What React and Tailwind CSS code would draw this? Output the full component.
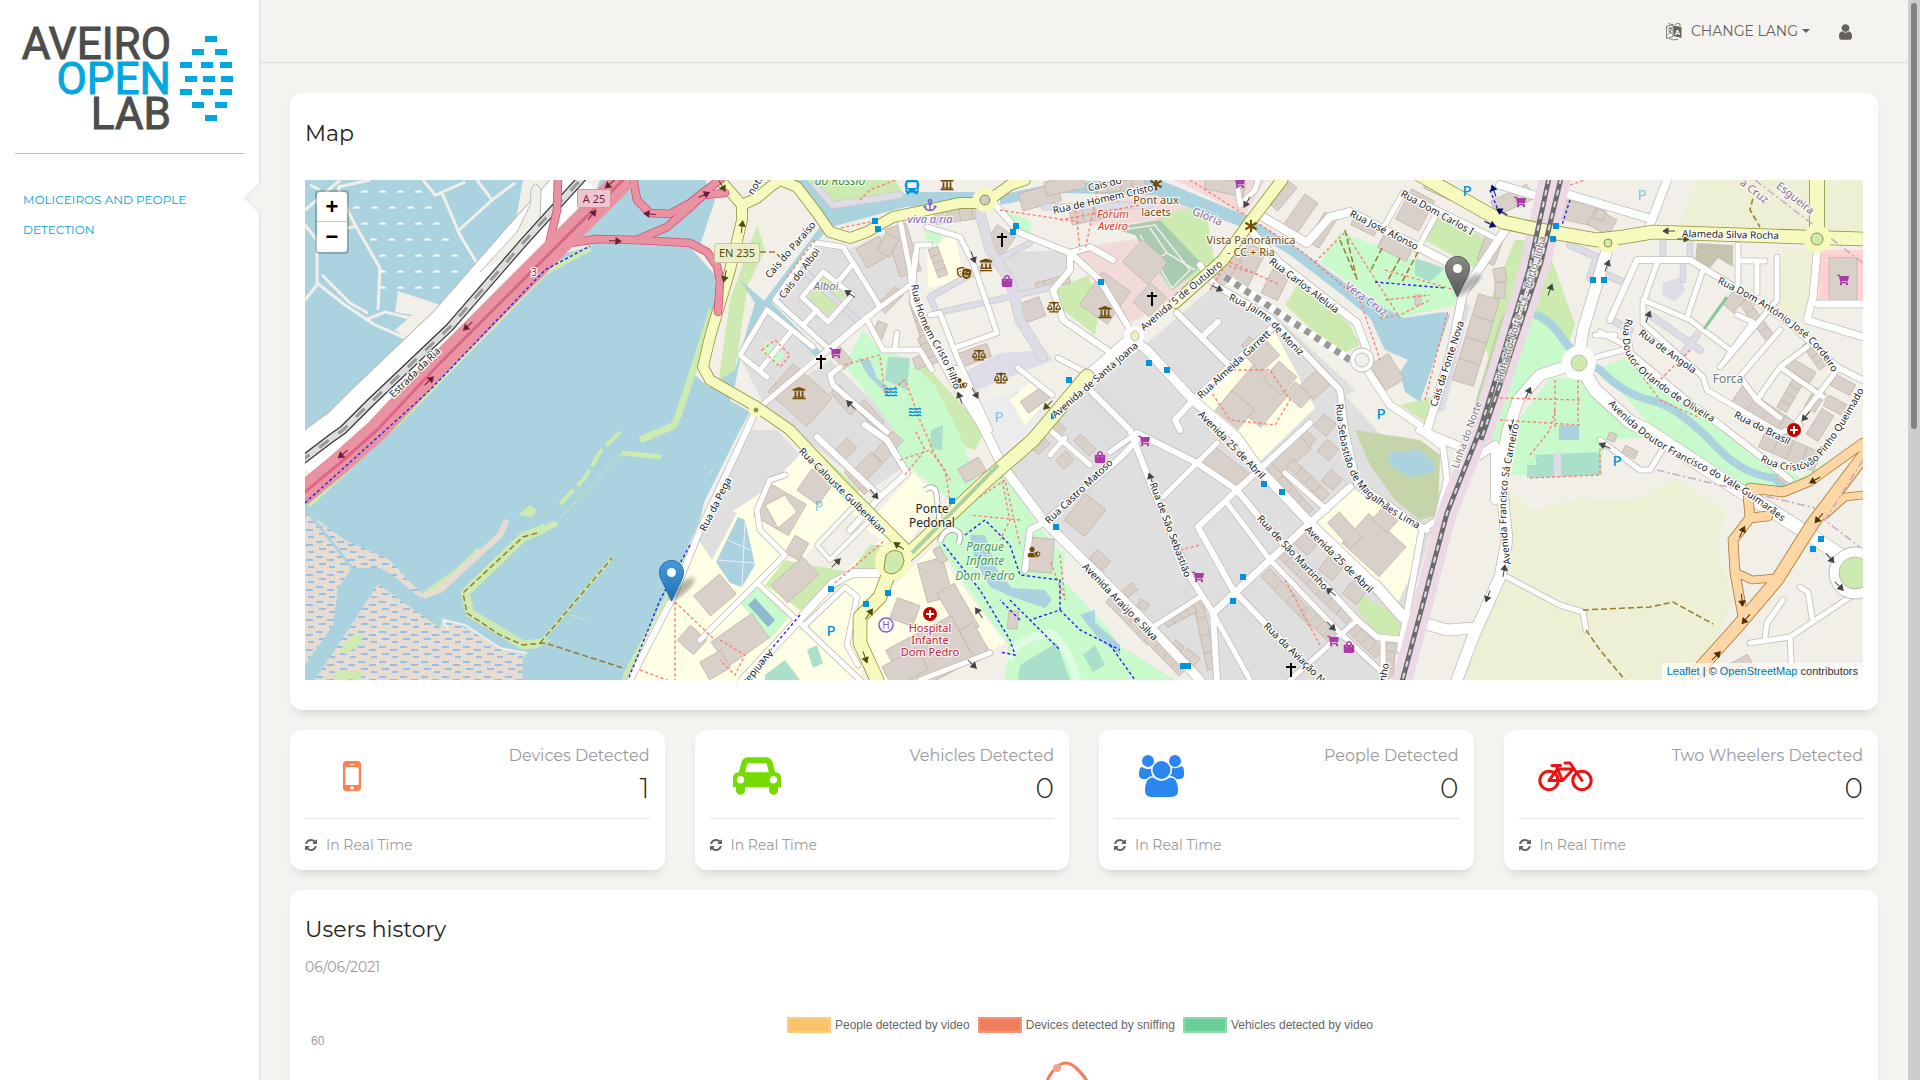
import React from "react";
import {
  FaShoppingCart,
  FaShoppingBag,
  FaUniversity,
  FaBalanceScale,
  FaTheaterMasks,
  FaAnchor,
  FaBus,
  FaAsterisk,
  FaUserShield,
  FaLandmark,
  FaWater,
} from "react-icons/fa";

const UI_FONT = "font-['Montserrat','Inter',sans-serif]";

/* ---------- icons ---------- */

const REFRESH =
  "M1511 928q0 5-1 7-64 268-268 434.5t-478 166.5q-146 0-282.5-55t-243.5-157l-129 129q-19 19-45 19t-45-19-19-45v-448q0-26 19-45t45-19h448q26 0 45 19t19 45-19 45l-137 137q71 66 161 102t187 36q134 0 250-65t186-179q11-17 53-117 8-23 30-23h192q13 0 22.5 9.5t9.5 22.5zm25-800v448q0 26-19 45t-45 19h-448q-26 0-45-19t-19-45 19-45l138-138q-148-137-349-137-134 0-250 65t-186 179q-11 17-53 117-8 23-30 23h-199q-13 0-22.5-9.5t-9.5-22.5v-7q65-268 270-434.5t480-166.5q146 0 284 55.5t245 156.5l130-129q19-19 45-19t45 19 19 45z";
const USER =
  "M1536 1399q0 109-62.5 187t-150.5 78h-854q-88 0-150.5-78t-62.5-187q0-85 8.5-160.5t31.5-152 58.5-131 94-89 134.5-34.5q131 128 313 128t313-128q76 0 134.5 34.5t94 89 58.5 131 31.5 152 8.5 160.5zm-256-887q0 159-112.5 271.5t-271.5 112.5-271.5-112.5-112.5-271.5 112.5-271.5 271.5-112.5 271.5 112.5 112.5 271.5z";
const CAR =
  "M480 1088q0-66-47-113t-113-47-113 47-47 113 47 113 113 47 113-47 47-113zm36-320h1016l-89-357q-2-8-14-17.5t-21-9.5h-768q-9 0-21 9.5t-14 17.5zm1372 320q0-66-47-113t-113-47-113 47-47 113 47 113 113 47 113-47 47-113zm160-96v384q0 14-9 23t-23 9h-96v128q0 80-56 136t-136 56-136-56-56-136v-128h-1024v128q0 80-56 136t-136 56-136-56-56-136v-128h-96q-14 0-23-9t-9-23v-384q0-93 65.5-158.5t158.5-65.5h28l105-419q23-94 104-157.5t179-63.5h768q98 0 179 63.5t104 157.5l105 419h28q93 0 158.5 65.5t65.5 158.5z";
const MOBILE =
  "M976 1408q0-33-23.5-56.5t-56.5-23.5-56.5 23.5-23.5 56.5 23.5 56.5 56.5 23.5 56.5-23.5 23.5-56.5zm208-160v-704q0-13-9.5-22.5t-22.5-9.5h-512q-13 0-22.5 9.5t-9.5 22.5v704q0 13 9.5 22.5t22.5 9.5h512q13 0 22.5-9.5t9.5-22.5zm-192-848q0-16-16-16h-160q-16 0-16 16t16 16h160q16 0 16-16zm288-16v1024q0 52-38 90t-90 38h-512q-52 0-90-38t-38-90v-1024q0-52 38-90t90-38h512q52 0 90 38t38 90z";
const USERS =
  "M657 896q-162 5-265 128h-134q-82 0-138-40.5t-56-118.5q0-353 124-353 6 0 43.5 21t97.5 42.5 119 21.5q67 0 133-23-5 37-5 66 0 159 90 293zm1071 637q0 120-73 189.5t-194 69.5h-874q-121 0-194-69.5t-73-189.5q0-53 3.5-103.5t14-109 26.5-108.5 43-97.5 62-81 85.5-53.5 111.5-20q10 0 43 21.5t73 48 107 48 135 21.5 135-21.5 107-48 73-48 43-21.5q61 0 111.5 20t85.5 53.5 62 81 43 97.5 26.5 108.5 14 109 3.5 103.5zm-1024-1277q0 106-75 181t-181 75-181-75-75-181 75-181 181-75 181 75 75 181zm704 384q0 159-112.5 271.5t-271.5 112.5-271.5-112.5-112.5-271.5 112.5-271.5 271.5-112.5 271.5 112.5 112.5 271.5zm576 225q0 78-56 118.5t-138 40.5h-134q-103-123-265-128 90-134 90-293 0-29-5-66 66 23 133 23 59 0 119-21.5t97.5-42.5 43.5-21q124 0 124 353zm-128-609q0 106-75 181t-181 75-181-75-75-181 75-181 181-75 181 75 75 181z";

const MobileIcon = () => (
  <svg viewBox="512 256 768 1280" className="h-[30px] w-[18px]" fill="#ff7f50"><path d={MOBILE} /></svg>
);
const CarIcon = () => (
  <svg viewBox="0 128 2048 1600" className="h-[38px] w-12" fill="#74da00"><path d={CAR} /></svg>
);
const PeopleIcon = () => (
  <svg viewBox="64 0 1920 1792" className="h-[42px] w-[45px]" fill="#2c86ef"><path d={USERS} /></svg>
);
const BikeIcon = () => (
  <svg viewBox="0 0 55 31" className="h-[31px] w-[55px]" fill="none" stroke="#ec1313" strokeWidth="3" strokeLinejoin="round" strokeLinecap="round">
    <circle cx="11" cy="19.5" r="9.2" />
    <circle cx="44" cy="19.5" r="9.2" />
    <path d="M11 19.5h13.5L35.5 8H19.5zM18 4.500l6.500 15M14 4.500h8.500M27 2h5l12 17.500" />
  </svg>
);

const LangIcon = () => (
  <svg viewBox="0 0 16 19" className="h-[19px] w-4" fill="none" stroke="#66615b">
    <path d="M.5 4.500 7 2.500v12L.5 16.500z" strokeWidth=".8" />
    <path d="M7.500 3.500 15.500 5v11l-8-2z" fill="#66615b" stroke="none" />
    <path d="M2 7l4-1M4 5v1.500M5.500 6.500Q4.500 11 2 12.500M2.500 8Q4 11 6 11.500" strokeWidth=".9" />
    <path d="M2.500 1.500 7 3M9 2.500Q12 .5 14 2v2M3 16.500q4 2.500 9 .8" strokeWidth=".8" />
    <text x="11.5" y="12.5" fontSize="8" fontWeight="700" fontFamily="Liberation Sans" fill="#fff" stroke="none" textAnchor="middle">A</text>
  </svg>
);

function Logo() {
  const bricks = [
    [205, 36], [192, 49], [215, 49], [180, 62], [201, 62], [220, 62], [185, 76],
    [203, 76], [221, 76], [180, 89], [201, 89], [220, 89], [192, 102], [215, 102], [205, 115],
  ];
  return (
    <svg viewBox="18 22 218 112" className="h-28 w-[218px]" role="img" aria-label="Aveiro Open Lab">
      <g fontFamily="Roboto, sans-serif" fontSize="44" textAnchor="end">
        <text x="171" y="59" fill="#4d4d4d" stroke="#4d4d4d">AVEIRO</text>
        <text x="171" y="94" fill="#00a7e1" stroke="#00a7e1">OPEN</text>
        <text x="171" y="129" fill="#4d4d4d" stroke="#4d4d4d">LAB</text>
      </g>
      {bricks.map(([x, y], i) => (
        <rect key={i} x={x} y={y} width="12" height="6" fill="#00a7e1" />
      ))}
    </svg>
  );
}

/* ---------- map data ---------- */

const AREAS = [
  // residential
  ["#e0dfdf", "M813 247 847 250 905 225 913 283 833 347 773 303Z"],
  ["#e0dfdf", "M767 313 820 350 763 403 740 357Z"],
  ["#e0dfdf", "M830 360 913 440 900 470 870 490 775 415 763 405Z"],
  ["#e0dfdf", "M747 430 777 430 800 455 763 493 715 560 700 545Z"],
  ["#e0dfdf", "M990 253 1067 250 1070 280 1013 297Z"],
  ["#e0dfdf", "M1145 345 1215 285 1290 330 1345 395 1440 500 1400 640 1390 680 1200 680 1043 520 1003 465 1060 410Z"],
  ["#e0dfdf", "M1275 315 1355 390 1340 400Z"],
  ["#ececec", "M985 400 1040 385 1060 405 1000 460Z"],
  // schools and hospital
  ["#ffffe5", "M800 455 890 540 880 600 860 680 630 680 668 600 705 530 765 490Z"],
  ["#ffffe5", "M913 473 940 497 907 545 877 513Z"],
  ["#ffffe5", "M933 547 1005 643 935 680 880 680 862 640 890 590Z"],
  ["#ffffe5", "M927 245 955 235 962 270 968 280 928 288Z"],
  ["#ffffe5", "M1200 400 1275 332 1315 408 1253 468Z"],
  ["#ffffe5", "M1352 488 1420 530 1418 560 1397 605 1315 524Z"],
  ["#ffffe5", "M1010 400 1030 383 1048 400 1025 425Z"],
  ["#e0dfdf", "M713 505 737 513 712 560 695 535Z"],
  ["#f2efe9", "M800 562 848 508 868 530 880 540 840 575Z"],
  // commercial
  ["#f2dad9", "M1065 250 1160 235 1215 260 1215 275 1132 322Z"],
  ["#f2dad9", "M1080 205 1130 190 1210 205 1190 220 1090 225Z"],
  ["#f2dad9", "M1175 180 1265 180 1245 215Z"],
  ["#ffd1d1", "M1820 250 1863 250 1863 303 1818 303Z"],
  // grass
  ["#cdebb0", "M797 180 895 180 905 195 830 205Z"],
  ["#cdebb0", "M757 225 765 250 748 285 735 370 718 385 730 300Z"],
  ["#cdebb0", "M823 275 845 295 828 315 808 298Z"],
  ["#cdebb0", "M917 365 925 365 985 430 975 450 945 440Z"],
  ["#cdebb0", "M808 442 860 490 845 500 800 450Z"],
  ["#cdebb0", "M1055 290 1088 275 1100 305 1095 335 1063 310Z"],
  ["#cdebb0", "M1300 280 1350 325 1360 345 1340 355 1285 305Z"],
  ["#cdebb0", "M1435 215 1490 240 1478 270 1425 240Z"],
  ["#cdebb0", "M1515 240 1545 240 1575 325 1568 345 1525 310 1490 360 1478 330Z"],
  ["#cdebb0", "M1400 405 1440 395 1430 425Z"],
  ["#cdebb0", "M1360 595 1403 618 1400 637 1375 633 1358 610Z"],
  ["#cdebb0", "M785 560 855 573 835 590 800 610 765 585Z"],
  ["#cdebb0", "M870 545 885 545 875 570 850 572Z"],
  ["#cdebb0", "M1160 215 1205 205 1215 265 1170 290 1150 260Z"],
  ["#c3d5a9", "M1355 430 1420 440 1440 455 1438 515 1420 520 1395 500 1370 465Z"],
  ["#c3d5a9", "M1520 290 1490 400 1470 420 1500 320Z"],
  // cemetery
  ["#aacbaf", "M1110 228 1160 220 1203 265 1172 290 1135 235Z"],
  // parks
  ["#c8facc", "M863 330 880 348 905 358 935 385 960 435 978 485 1000 472 1050 540 1065 555 1063 580 1110 630 1130 670 1130 680 1005 680 1008 645 937 545 950 500 900 460 895 430 845 365Z"],
  ["#c8facc", "M925 225 945 232 938 245 925 240Z"],
  ["#c8facc", "M1008 212 1030 220 1032 240 1010 228Z"],
  ["#c8facc", "M765 340 785 355 775 365 762 352Z"],
  ["#c8facc", "M1340 232 1455 275 1455 305 1400 318 1320 262Z"],
  ["#c8facc", "M1525 310 1568 345 1560 365 1530 380 1500 430 1485 440 1478 430Z"],
  ["#c8facc", "M1550 378 1590 378 1650 437 1605 440 1600 475 1512 475 1515 425Z"],
  ["#c8facc", "M1600 368 1630 355 1650 380 1720 425 1800 478 1863 440 1863 450 1785 492 1740 485 1650 425Z"],
  ["#c8facc", "M1110 640 1175 680 1110 680Z"],
  ["#c8facc", "M757 585 790 615 770 640 738 600Z"],
  ["#c8facc", "M1490 430 1507 420 1495 450 1480 447Z"],
  // meadow
  ["#eef0d5", "M1697 180 1810 180 1810 230 1677 227Z"],
  ["#eef0d5", "M1825 180 1863 180 1863 231 1825 231Z"],
  ["#eef0d5", "M1783 247 1812 250 1810 305 1793 322 1777 312Z"],
  ["#eef0d5", "M1510 490 1533 510 1580 498 1633 500 1677 478 1727 510 1717 545 1732 597 1717 643 1680 680 1455 680 1500 590Z"],
  ["#c6c3ae", "M1697 243 1733 245 1733 267 1718 258 1710 268 1695 260Z"],
  // pedestrian
  ["#dddde8", "M963 373 1000 353 1043 350 1053 360 1010 377 970 393Z"],
  ["#dddde8", "M1663 283 1680 277 1685 290 1675 302 1662 295Z"],
  ["#dddde8", "M1458 300 1470 305 1445 410 1430 415Z"],
  // water
  ["#aad3df", "M783 180 807 180 830 207 915 192 975 192 970 202 905 207 828 228 815 210Z"],
  ["#aad3df", "M1000 195 1060 182 1160 180 1245 215 1300 250 1355 290 1403 318 1443 312 1450 315 1420 402 1405 392 1400 372 1408 360 1385 350 1370 318 1345 297 1290 255 1245 228 1155 195 1060 193 1000 205Z"],
  ["#aad3df", "M740 280 767 303 742 350 735 385 720 430 700 520 663 600 620 680 525 680 525 655 620 600 640 500 690 400 712 385 735 370 755 303Z"],
  ["#aad3df", "M1390 452 1420 450 1433 462 1435 472 1410 477 1390 465Z"],
  ["#aad3df", "M970 535 985 535 997 570 1012 588 1045 590 1052 600 1045 608 1015 598 990 587 975 560Z"],
  ["#aad3df", "M738 517 745 520 755 565 742 587 730 583 716 562Z"],
  ["#aad3df", "M858 358 870 360 877 378 892 390 888 395 868 375Z"],
  ["#aad3df", "M1080 615 1095 610 1095 622 1120 645 1120 655 1100 640Z"],
  ["#aad3df", "M1559 425 1579 425 1579 440 1559 440Z"],
  // pitches
  ["#aae0cb", "M888 357 910 358 907 390 885 380Z"],
  ["#aae0cb", "M931 430 943 425 942 450 930 448Z"],
  ["#aae0cb", "M1415 258 1445 268 1430 282 1415 275Z"],
  ["#aae0cb", "M1535 455 1600 452 1602 475 1527 478 1527 465 1537 465Z"],
  ["#dddde8", "M1554 453 1561 453 1561 477 1554 477Z"],
  ["#8eb9cf", "M748 605 755 598 775 620 768 627Z"],
  ["#aae0cb", "M1020 665 1057 643 1070 680 1018 680Z"],
  ["#aae0cb", "M807 650 817 645 823 663 813 668Z"],
  ["#aae0cb", "M1083 655 1095 645 1105 665 1093 672Z"],
  ["#aae0cb", "M765 675 785 660 800 680 765 680Z"],
];

const MARSH = [
  "M307 512 345 540 390 560 408 580 425 596 420 598 395 577 380 568 352 568 338 588 333 625 305 665 305 520Z",
  "M378 584 440 628 443 618 470 630 495 645 523 655 522 680 315 680Z",
];

const BUILDINGS = [
  [903, 250, 22, 50, -18], [873, 252, 26, 22, -30], [890, 300, 26, 12, -45], [938, 262, 10, 30, -20],
  [1000, 240, 22, 22, 35], [960, 215, 50, 12, -8], [1040, 197, 40, 18, -15], [1065, 185, 40, 14, -12],
  [1120, 186, 50, 10, -6], [1095, 212, 50, 16, -12], [1225, 186, 40, 14, 12], [1145, 262, 34, 30, 42],
  [1150, 300, 22, 26, 42], [1105, 298, 34, 40, 35], [1032, 310, 22, 20, -20], [1053, 283, 34, 9, -15],
  [975, 355, 30, 14, -20], [920, 362, 12, 12, -20], [842, 358, 20, 12, 50], [800, 395, 52, 38, 42],
  [845, 400, 30, 12, 48], [870, 415, 30, 12, 48], [888, 447, 14, 30, 42], [865, 470, 34, 16, -45],
  [845, 450, 20, 14, -45], [815, 487, 26, 26, 35], [780, 510, 40, 36, 30], [797, 548, 16, 20, 30],
  [795, 580, 42, 24, -42], [715, 595, 34, 26, -40], [692, 640, 22, 20, 42], [740, 640, 50, 30, -35],
  [715, 665, 24, 20, -30], [935, 580, 26, 40, -15], [920, 320, 10, 40, -18], [928, 350, 10, 30, -24],
  [958, 610, 20, 50, -30], [930, 655, 74, 50, -28], [905, 612, 24, 22, 20], [905, 668, 40, 24, -28],
  [975, 642, 36, 16, 60], [940, 555, 8, 16, -30], [1039, 555, 28, 34, 5], [1013, 620, 10, 18, 5],
  [972, 470, 24, 16, -30], [1085, 515, 26, 34, 38], [1040, 445, 16, 12, -45], [1065, 460, 14, 12, -45],
  [1085, 445, 22, 10, 45], [1100, 560, 18, 12, 42], [1055, 425, 22, 10, 45], [1035, 400, 26, 14, -35],
  [1258, 395, 46, 46, 40], [1235, 410, 30, 26, 40], [1280, 378, 24, 24, 42], [1298, 395, 22, 16, 42],
  [1262, 355, 26, 24, -42], [1315, 385, 22, 20, -42], [1325, 425, 16, 16, 40], [1305, 440, 16, 16, 40],
  [1226, 468, 50, 20, 38], [1290, 455, 40, 18, -40], [1290, 490, 60, 9, 48], [1308, 480, 50, 10, 44],
  [1328, 450, 15, 15, 40], [1332, 480, 15, 15, 40], [1374, 545, 50, 40, 42], [1345, 530, 34, 16, 48],
  [1385, 520, 20, 16, 42], [1306, 542, 20, 18, 42], [1331, 568, 18, 18, 40], [1355, 592, 18, 18, 40],
  [1300, 570, 62, 12, 44], [1330, 600, 56, 12, 44], [1290, 598, 70, 12, 46], [1320, 625, 40, 12, 46],
  [1365, 640, 40, 12, 44], [1390, 660, 9, 34, 3], [1205, 635, 10, 70, -12], [1180, 615, 34, 10, -28],
  [1175, 650, 12, 16, 40], [1190, 658, 16, 12, 40], [1130, 620, 60, 10, 46], [1165, 655, 50, 9, 46],
  [1130, 590, 12, 9, -40], [1143, 605, 10, 8, 30], [1300, 215, 16, 40, 35], [1282, 195, 14, 30, 40],
  [1322, 230, 14, 34, 32], [1395, 248, 32, 14, 26], [1415, 210, 26, 34, 28], [1365, 225, 26, 12, 26],
  [1490, 250, 18, 26, 20], [1387, 372, 22, 30, -32], [1476, 340, 22, 90, 17], [1440, 188, 30, 14, 25],
  [1248, 265, 20, 40, 28], [1275, 285, 18, 26, 26], [1225, 268, 18, 30, 35], [1512, 200, 40, 16, -25],
  [1580, 213, 44, 20, 12], [1602, 222, 24, 18, 30], [1843, 279, 28, 43, 0],
  [1757, 320, 10, 46, -36], [1735, 300, 14, 22, 40], [1800, 370, 30, 12, 30], [1815, 355, 30, 10, 55],
  [1790, 395, 11, 34, 30], [1765, 415, 70, 22, 34], [1843, 385, 22, 12, 28], [1835, 405, 20, 12, 28],
  [1815, 400, 12, 22, 30], [1790, 450, 60, 20, 24], [1820, 425, 14, 30, 32], [1630, 452, 14, 8, 28],
  [1612, 437, 8, 8, 20], [1782, 478, 10, 6, 30], [1740, 672, 30, 24, -28], [1500, 290, 10, 16, 0],
  [1600, 215, 10, 10, 20], [1418, 300, 6, 10, 0], [1250, 345, 12, 12, 40], [1500, 275, 12, 14, -10],
  [888, 245, 14, 20, 30], [880, 330, 10, 16, 20], [858, 480, 30, 10, 48],
];

const LANES = [
  // [width, path]
  [5, "M817 243 843 247 880 307 830 350 M913 283 867 317 760 407 M813 245 775 300 830 350"],
  [5, "M823 272 852 295 828 322 802 297Z M852 265 838 282 M817 310 803 325 M767 310 740 355 767 377 M767 310 813 347 M790 333 760 370"],
  [5, "M900 220 910 270 913 303 930 340 953 383 983 430 M927 227 960 237 973 263 997 333 957 347 M930 315 940 313 957 357 990 430"],
  [5, "M867 320 883 350 920 350 932 370 M897 333 895 348 M915 255 913 283 M930 245 917 245 915 265"],
  [6, "M997 207 1020 233 1070 253 1100 280 1132 333 M1070 253 1090 247 1113 260 M1070 253 1070 270 1053 290 1063 320 1107 350"],
  [5, "M1018 368 1052 395 M1058 358 1085 372 M840 367 830 375 833 385 887 432"],
  [8, "M1307 243 1330 217 1350 212 1457 267 M1263 217 1307 243"],
  [5, "M1403 193 1493 237 M1403 193 1385 225 M1437 213 1417 250 M1238 190 1240 205 1255 190 1258 180"],
  [8, "M1507 227 1463 293 1450 357 1427 430"],
  [7, "M1253 233 1280 263 1357 323 1367 350 M1367 370 1390 405 1420 425"],
  [6, "M1200 265 1215 285 1270 317 1340 390 1345 430 1357 483 1410 520 1427 530"],
  [6, "M1273 327 1193 400 1175 420 1180 430 M1177 313 1227 363 M1218 322 1202 337"],
  [9, "M1130 337 1147 350 1193 400 1237 437 1260 470 1310 523 1377 587"],
  [11, "M1375 585 1403 617 1447 630 1475 628"],
  [6, "M1085 385 1130 430 1153 490 1190 577 1213 613 1217 680"],
  [6, "M1137 433 1197 463 1237 490 1267 527 1323 583 1357 620 1377 637 1403 640"],
  [6, "M1310 423 1237 490 1198 527 1233 590 1310 670"],
  [7, "M1350 487 1310 523 1270 560 1213 613"],
  [5, "M1200 597 1153 627 M1227 503 1270 560 1340 633 1385 675 M1357 620 1290 680 M1163 497 1217 443 M1285 473 1327 510 M1383 640 1383 680"],
  [6, "M1140 437 1120 458 1043 523 M1025 570 1030 530 1045 522"],
  [5, "M1050 455 1065 438 M1090 465 1050 430 M1213 613 1250 680 M1110 452 1137 433"],
  [9, "M955 370 1003 467 1043 520 1090 567 1120 597 1153 630 1200 680"],
  [11, "M1133 337 1088 376"],
  [6, "M817 437 880 497 907 473 887 440 865 425 M880 497 850 530"],
  [8, "M743 680 833 583 853 573 880 573"],
  [5, "M757 583 800 623 860 680 M700 640 757 583 785 555 760 530 757 510 770 480 785 475"],
  [5, "M805 625 845 587 857 597 847 645 858 665 M920 680 990 653"],
  [4, "M817 545 855 505 870 520 830 560Z"],
  [6, "M1420 430 1443 447 1447 480 1437 520 1422 530 1400 650"],
  [11, "M1607 250 1583 330 1578 363 1540 375 1518 400 1508 430 1500 470 1507 540 1500 577 1473 637 1457 680"],
  [8, "M1420 430 1480 455 1495 445 1495 500"],
  [13, "M1580 365 1595 390 1630 422 1647 430 1723 480 1807 533 1840 555"],
  [6, "M1610 320 1637 260 1690 260 1723 280 1790 323 1837 367 1863 380"],
  [5, "M1657 263 1643 303 1643 323 1703 377 1707 390 1780 433 1800 425"],
  [6, "M1627 333 1630 353 1690 403 1723 427 1765 460 1790 480"],
  [5, "M1643 300 1690 320 1730 350 M1703 270 1687 317 M1738 245 1738 287 M1738 261 1765 261 M1757 261 1757 293"],
  [5, "M1777 257 1777 300 1720 367 M1780 330 1737 380 M1807 347 1780 367 1757 400 M1780 367 1823 397 M1837 370 1795 425"],
  [5, "M1740 377 1757 400 1780 418 M1737 315 1753 322 1727 357 M1597 357 1623 350"],
  [7, "M1817 253 1813 297 1807 320 M1807 320 1863 337 M1818 304 1863 304"],
  [8, "M1667 180 1650 225 M1570 195 1648 218 M1500 185 1540 197"],
  [5, "M1595 335 1615 335 M1600 332 1625 345 M1850 597 1790 637 1750 643 M1790 637 1792 680 M1812 618 1808 592 1800 587 M1765 637 1767 623 1783 600"],
  [5, "M1507 577 1560 605 1583 612 1586 630 M1600 440 1640 470 1650 470 1665 445"],
  [6, "M757 407 747 430 700 530 673 597 630 680"],
];

const PLAZAS = [
  [9, "M980 213 990 250 1010 280 1020 320 1043 357"],
  [5, "M1030 243 997 260 930 297 937 313 1053 287 M803 270 857 320 M1683 260 1683 280 M1663 240 1663 258 M1690 240 1690 260"],
  [6, "M1650 315 1700 350 M1697 335 1680 358 M1607 275 1625 283 M1570 245 1597 257 1590 278 M1612 320 1630 330"],
  [6, "M815 185 833 205 M833 205 900 195 M1045 207 1150 205"],
];

const YELLOW = [
  [10, "M720 180 742 205 742 220 730 270 710 337 703 367 710 380 757 407 790 430 840 483 887 530 905 548"],
  [10, "M742 205 757 198 770 187 780 180 797 187 817 213 830 232 850 238 867 232 893 217 927 210 960 203 985 203 1010 185 1025 180"],
  [11, "M1282 180 1250 222 1223 260 1175 303"],
  [13, "M1087 376 1033 440 987 480 913 550 890 570 880 597 860 617 860 643 877 680"],
  [13, "M1420 175 1503 222 1540 230 1597 240 1623 237 1653 232 1863 239"],
  [14, "M1817 180 1817 240"],
];

const PINK_PATHS = [
  "M815 240 785 280 M830 230 870 222 M762 350 775 340 790 355 780 367Z M845 365 880 355 885 395 905 380 920 420 935 455 950 480",
  "M900 460 930 450 945 470 950 500 M905 475 925 450 915 430 M975 500 1005 480 1020 545 M1000 470 1010 520 1000 540 M1020 520 970 515",
  "M1060 555 1065 600 1050 560 M720 640 745 655 735 675 720 660 M675 602 675 680 M675 602 715 640 M640 670 680 685",
  "M835 583 885 540 M1210 390 1225 370 1270 370 1290 400 1275 425 1230 420Z M1315 262 1345 232 1400 318 M1425 400 1448 310",
  "M1385 270 1455 290 M1385 300 1430 295 M1380 318 1400 315 1430 300 M1190 180 1245 215 1300 250 1360 300 1380 360 M1230 262 1280 285",
  "M1285 580 1320 645 M1500 398 1580 400 M1500 420 1580 425 M1555 380 1555 430 M1578 380 1578 425 M1530 478 1600 475 1600 440 M1530 455 1550 430 1555 410",
  "M1630 360 1660 400 1700 418 M1570 185 1600 175 M1075 205 1080 250 M1000 210 1080 222 M1100 180 1085 250",
  "M1180 550 1200 545 M1210 290 1225 265 1260 275 M1690 350 1660 380 M1060 220 1140 205 M895 180 870 190 860 200",
];

const CYCLE_PATHS = [
  "M690 545 660 600 628 680", "M305 503 430 390 545 270 590 246", "M940 540 980 590 1010 640 1015 655 1000 652",
  "M965 535 985 520 1010 545 1020 575 1060 580 1060 610 1030 620", "M1010 600 1060 650", "M1060 610 1080 630 1120 650",
  "M1375 282 1445 288", "M1570 200 1562 225", "M1490 190 1500 215", "M1110 645 1135 680", "M800 615 745 680", "M1020 620 1000 600",
];

const BROWN_TRACKS = [
  "M537 533 523 537 463 593 467 613 500 635 523 645 545 643 623 668", "M540 643 612 558",
  "M1583 610 1650 607 1673 602 1713 624", "M1586 630 1600 650 1625 680", "M760 252 775 252 785 262",
  "M1340 240 1355 275", "M1345 230 1357 280", "M1382 248 1370 272", "M1400 258 1388 280", "M1418 252 1402 282", "M1755 190 1750 210 1760 227",
];

const BUS_STOPS = [
  [875, 221], [878, 229], [1016, 226], [1013, 232], [1101, 282], [1069, 380], [1054, 416], [1149, 363],
  [1167, 370], [1556, 226], [1553, 239], [1593, 280], [1604, 280], [952, 501], [831, 589], [888, 593],
  [866, 604], [1056, 527], [1264, 484], [1282, 492], [1243, 577], [1233, 601], [1183, 666], [1188, 666], [1821, 539], [1813, 549],
];

const ARROWS = [
  ["#6b1f3a", 610, 184, 140], ["#6b1f3a", 592, 215, -50], ["#6b1f3a", 650, 214, 185], ["#6b1f3a", 704, 195, -25],
  ["#6b1f3a", 615, 241, 2], ["#6b1f3a", 468, 326, 137], ["#6b1f3a", 429, 381, -43], ["#6b1f3a", 343, 454, 140],
  ["#4d4d12", 722, 186, 60], ["#4d4d12", 742, 227, -83], ["#4d4d12", 725, 276, 103], ["#444", 973, 257, 70],
  ["#444", 850, 294, 215], ["#444", 851, 405, 225], ["#444", 960, 398, 250], ["#444", 975, 393, 60],
  ["#4d4d12", 1048, 405, 135], ["#444", 1217, 288, 25], ["#444", 1247, 202, 120], ["#444", 1669, 231, 180],
  ["#4d4d12", 1683, 239, 0], ["#444", 1607, 266, -70], ["#444", 1550, 290, -70], ["#444", 1648, 317, -70],
  ["#444", 1528, 393, -65], ["#444", 1512, 425, 105], ["#444", 1806, 416, 130], ["#444", 1151, 479, 250],
  ["#444", 1331, 592, 218], ["#444", 1331, 626, 45], ["#444", 1504, 571, -80], ["#444", 1488, 596, 110],
  ["#4d3000", 1815, 480, 150], ["#4d3000", 1819, 518, 130], ["#4d3000", 1742, 532, -65], ["#4d3000", 1742, 600, 85],
  ["#4d3000", 1746, 619, 130], ["#4d3000", 1716, 656, -45], ["#444", 1830, 558, 50], ["#444", 1839, 586, 45],
  ["#444", 1605, 446, 205], ["#444", 874, 494, 50], ["#444", 836, 563, -45], ["#4d4d12", 899, 546, 215],
  ["#4d4d12", 869, 614, -55], ["#4d4d12", 865, 657, 70], ["#444", 979, 613, 235], ["#444", 972, 664, 45],
  ["#00107a", 1494, 191, 250], ["#00107a", 1502, 212, 210], ["#00107a", 1490, 224, 25],
];

const LABELS = [
  // [text, start x, start y, end x, end y]
  ["Estrada da Ria", 392, 394, 437, 350], ["Cais do Paraíso", 768, 275, 812, 224], ["Cais do Alboi", 782, 295, 816, 251],
  ["Rua de Homem Cristo", 1058, 209, 1148, 188], ["Cais do", 1087, 188, 1122, 179], ["Avenida 5 de Outubro", 1145, 325, 1217, 265],
  ["Rua Carlos Aleluia", 1274, 262, 1335, 308], ["Rua Almeida Garrett", 1202, 393, 1265, 335], ["Rua José Afonso", 1354, 214, 1415, 245],
  ["Rua Dom Carlos I", 1405, 194, 1470, 230], ["Cais da Fonte Nova", 1434, 402, 1459, 325], ["Avenida de Santa Joana", 1058, 411, 1131, 348],
  ["Alameda Silva Rocha", 1682, 233, 1779, 235], ["Rua de Angola", 1643, 333, 1693, 369], ["Rua do Brasil", 1738, 415, 1787, 440],
  ["Rua da Pega", 703, 528, 727, 480], ["Rua Calouste Gulbenkian", 801, 449, 885, 532], ["Avenida", 771, 653, 750, 680],
  ["Rua Castro Matoso", 1050, 518, 1107, 464], ["Avenida Araújo e Silva", 1088, 568, 1153, 635], ["Rua de São Sebastião", 1155, 487, 1187, 572],
  ["Avenida 25 de Abril", 1203, 415, 1261, 474], ["Avenida 25 de Abril", 1310, 530, 1369, 588], ["Rua de São Martinho", 1263, 520, 1323, 584],
  ["Rua da Aviação Naval", 1270, 628, 1333, 690], ["nho", 1382, 680, 1385, 664], ["noto", 748, 196, 763, 172],
];

const CURVED_LABELS = [
  ["homem", "Rua Homem Cristo Filho", "M911 285Q917 320 932 343T954 390"],
  ["moniz", "Rua Jaime de Moniz", "M1228 300Q1262 314 1275 330T1300 356"],
  ["antonio", "Rua Dom António José Cordeiro", "M1717 283Q1760 303 1790 326T1832 372"],
  ["orlando", "Rua Doutor Orlando de Oliveira", "M1626 318Q1616 350 1638 371T1715 424"],
  ["guimaraes", "Avenida Doutor Francisco do Vale Guimarães", "M1608 404Q1640 440 1690 464T1785 524"],
  ["pinho", "Rua Cristóvão Pinho Queimado", "M1760 461Q1800 482 1822 456T1866 386"],
  ["carneiro", "Avenida Francisco Sá Carneiro", "M1511 564Q1504 520 1507 490T1525 400"],
  ["lima", "Rua Sebastião de Magalhães Lima", "M1336 404Q1340 460 1355 482T1420 530"],
];

const POI_TEXT = [
  // [text, x, y, colour, size, italic, rotation]
  ["do Rossio", 840, 185, "#3a8a3a", 12, true, 0], ["viva a ria", 930, 223, "#8461c4", 11, true, 0], ["Alboi", 826, 290, "#777", 11, true, 0],
  ["Fórum", 1113, 218, "#e03c31", 11, true, 0], ["Aveiro", 1113, 230, "#e03c31", 11, true, 0],
  ["Pont aux", 1156, 204, "#734a08", 11, false, 0], ["lacets", 1156, 216, "#734a08", 11, false, 0],
  ["Vista Panorâmica", 1251, 244, "#734a08", 11, false, 0], ["- CC + Ria", 1251, 256, "#734a08", 11, false, 0],
  ["Glória", 1206, 220, "#8d6a99", 11, false, 22], ["Vera Cruz", 1364, 302, "#8d6a99", 11, false, 36],
  ["Esgueira", 1793, 201, "#8d6a99", 11, false, 38], ["a Cruz", 1752, 194, "#8d6a99", 11, false, 38],
  ["Forca", 1728, 383, "#777", 12, false, 0], ["Ponte", 932, 513, "#222", 12, false, 0], ["Pedonal", 932, 527, "#222", 12, false, 0],
  ["Parque", 985, 551, "#3f9c4f", 12, true, 0], ["Infante", 985, 565, "#3f9c4f", 12, true, 0], ["Dom Pedro", 985, 580, "#3f9c4f", 12, true, 0],
  ["Hospital", 930, 632, "#c0283c", 11, false, 0], ["Infante", 930, 644, "#c0283c", 11, false, 0], ["Dom Pedro", 930, 656, "#c0283c", 11, false, 0],
  ["Linha do Norte - Lx - Porto, linha", 1524, 310, "#777", 10, false, -73], ["Linha do Norte", 1470, 436, "#777", 10, false, -70],
];

const PARKINGS = [
  [1467, 196, 1], [1381, 419, 1], [1642, 200, 0.4], [999, 422, 0.4], [819, 511, 0.4], [831, 636, 1], [1617, 466, 1],
];

const POI_ICONS = [
  ...[[835, 353], [1144, 441], [1198, 577], [1333, 641], [1239, 183], [1520, 202], [1843, 280]].map((p) => [FaShoppingCart, "#ac39ac", 12, ...p]),
  ...[[1007, 281], [1100, 457], [1349, 647]].map((p) => [FaShoppingBag, "#ac39ac", 12, ...p]),
  ...[[799, 393], [1105, 312], [947, 184]].map((p) => [FaUniversity, "#734a08", 14, ...p]),
  ...[[1054, 307], [979, 355], [1001, 378]].map((p) => [FaBalanceScale, "#734a08", 14, ...p]),
  ...[[961, 383], [1034, 552]].map((p) => [FaUserShield, "#734a08", 13, ...p]),
  ...[[1156, 184], [1251, 226]].map((p) => [FaAsterisk, "#734a08", 13, ...p]),
  ...[[891, 392], [915, 412]].map((p) => [FaWater, "#0092da", 13, ...p]),
  [FaTheaterMasks, "#734a08", 15, 964, 273],
  [FaLandmark, "#734a08", 13, 986, 265],
  [FaAnchor, "#8461c4", 14, 930, 205],
  [FaBus, "#0092da", 15, 912, 187],
];

function Pin({ x, y, from, to, id }) {
  return (
    <g transform={`translate(${x - 12.5} ${y - 41})`}>
      <ellipse cx="23" cy="29" rx="16" ry="5" fill="#000" opacity=".3" transform="rotate(-42 23 29)" filter="url(#soft)" />
      <linearGradient id={id} x1="0" y1="0" x2="0" y2="1">
        <stop offset="0" stopColor={from} />
        <stop offset="1" stopColor={to} />
      </linearGradient>
      <path d="M12.500.5C5.800.5.5 5.800.5 12.500c0 4 2 8 4.500 12.500L12.500 41 20 25c2.500-4.500 4.500-8.500 4.500-12.500C24.500 5.800 19.200.5 12.500.5z" fill={`url(#${id})`} stroke={to} />
      <circle cx="12.5" cy="12.5" r="4.5" fill="#fff" />
    </g>
  );
}

function Cased({ roads, fill, casing }) {
  return (
    <g fill="none" strokeLinejoin="round" strokeLinecap="round">
      {roads.map(([w, d]) => <path key={`c${d}`} d={d} stroke={casing} strokeWidth={w + 1.6} />)}
      {roads.map(([w, d]) => <path key={d} d={d} stroke={fill} strokeWidth={w} />)}
    </g>
  );
}

function CityMap() {
  const railWest = "M300 462 333 437 343 430 370 403 450 327 523 243 583 177";
  const railEast = ["M1549 178 1529 270 1480 430 1447 513 1402 682", "M1561 178 1541 262 1500 385 1481 440"];
  const motorway = "M300 496 340 463 377 430 440 363 523 280 573 230 625 178";
  const ramps = [
    [7, "M558 178 557 210 549 245"],
    [7, "M633 178 637 200 650 213 670 214 690 203 722 178"],
    [7, "M570 243 597 239 637 240 690 243 707 252 717 266 720 280 718 312"],
    [7, "M637 240 667 227 687 210 703 195 725 193"],
  ];
  const pondDams = [
    "M305 210 340 180", "M310 185 320 190", "M338 187 350 215 358 230 380 268 378 310", "M338 187 370 180", "M423 180 435 195 442 193 460 235 478 265",
    "M440 193 465 182", "M477 180 492 200 515 183", "M492 200 457 232", "M305 225 317 240 317 283 345 305 375 325 410 340", "M305 300 317 285",
    "M322 275 350 303 368 313", "M365 320 385 312 410 318", "M330 232 357 226",
  ];
  const orange = [
    [9, "M1863 443 1810 481 1783 492 1750 488"],
    [9, "M1768 516 1750 518 1733 540 1735 573 1743 617"],
    [7, "M1737 573 1752 580 1775 578"],
    [9, "M1748 495 1750 518"],
    [7, "M1863 495 1845 497 1825 515"],
    [12, "M1868 450 1813 523 1777 580 1737 627 1685 685"],
  ];
  const saltRows = [
    [361, 192, 4], [353, 208, 5], [361, 224, 5], [370, 240, 5], [379, 256, 5], [379, 272, 6], [379, 288, 4],
  ];
  return (
    <svg viewBox="305 180 1558 500" preserveAspectRatio="xMidYMid slice" className="block h-[500px] w-full" fontFamily="Noto Sans, sans-serif" role="img" aria-label="Map of Aveiro">
      <defs>
        <filter id="soft"><feGaussianBlur stdDeviation="2" /></filter>
        <pattern id="marsh" width="21" height="15" patternUnits="userSpaceOnUse">
          <path d="M1 2h7M12 5h7M4 9h7M14 12h6" stroke="#4aa3f5" />
        </pattern>
      </defs>
      <rect x="305" y="180" width="1558" height="500" fill="#f2efe9" />

      {/* lagoon */}
      <path d="M305 180H523L515 225 490 262 410 345 320 430 305 442Z" fill="#aad3df" />
      <path d="M600 180H705L715 200 700 245 575 245Z" fill="#aad3df" />
      <path d="M305 500 440 375 560 255 600 243 690 247 715 275 718 310 708 330 695 375 712 390 750 412 740 430 705 500 663 600 625 680H305Z" fill="#aad3df" />
      <g fill="none" stroke="#f2efe9" strokeWidth="3">{pondDams.map((d) => <path key={d} d={d} />)}</g>
      <path d="M398 291 440 305 425 330 410 340 395 330 412 315 395 312Z" fill="#f2efe9" />
      {saltRows.flatMap(([x, y, n]) =>
        Array.from({ length: n }, (_, i) => <path key={`${y}-${i}`} d={`M${x + i * 18} ${y}q3.500-3 7 0z`} fill="#fff" stroke="#fff" />)
      )}
      <g fill="none" stroke="#cdebb0" strokeLinejoin="round">
        <path d="M308 505 400 420 545 272 590 248" strokeWidth="6" />
        <path d="M545 528 523 537 465 593 470 613 523 645 543 643 622 668" strokeWidth="9" />
        <path d="M557 523 525 537" strokeWidth="6" />
        <path d="M540 643 612 558" strokeWidth="3" />
        <path d="M560 504 585 478 600 452 620 432" strokeWidth="4" strokeDasharray="20 5" />
        <path d="M560 518 622 453" strokeWidth="1" />
        <path d="M622 453 660 457 712 472" strokeWidth="5" />
        <path d="M712 310 695 365 675 425 640 440" strokeWidth="7" />
        <path d="M425 595 460 570 480 550" strokeWidth="7" />
        <path d="M700 500 670 590 640 640 625 680" strokeWidth="7" />
        <path d="M522 655 590 663 625 672" strokeWidth="3" />
        <path d="M570 615 635 635" strokeWidth="1" />
      </g>
      <path d="M518 515 530 505 537 510 533 517Z" fill="#cdebb0" />
      <path d="M507 520 500 535 440 590 423 596" fill="none" stroke="#e6dcd2" strokeWidth="6" />
      {MARSH.map((d) => <g key={d}><path d={d} fill="#e6dcd2" /><path d={d} fill="url(#marsh)" /></g>)}
      <path d="M340 650 355 633 363 635 360 645 345 654Z M330 678 340 670 362 672 360 680Z" fill="#cdebb0" />
      <path d="M308 512 330 540 352 568" fill="none" stroke="#aad3df" strokeWidth="3" />
      <path d="M448 630 443 620 465 625 500 648 535 655" fill="none" stroke="#e8f1f2" strokeWidth="2" />

      {AREAS.map(([fill, d]) => <path key={d} d={d} fill={fill} />)}
      <path d="M822 230 767 303 822 358" fill="none" stroke="#aad3df" strokeWidth="7" />
      <path d="M1520 312Q1545 312 1560 335T1600 370Q1625 395 1650 400T1710 440Q1740 475 1775 478L1785 490" fill="none" stroke="#aad3df" strokeWidth="8" />
      <path d="M745 520 742 587M718 560 755 563M728 540 750 550" stroke="#eef" fill="none" />
      <path d="M1120 230 1155 225 1190 270 1172 288 1140 235M1167 253 1150 228M1167 253 1195 270M1167 253 1140 268" fill="none" stroke="#eee" strokeWidth="1.5" />

      <g fill="#d9d0c9" stroke="#c4b6ab" strokeWidth=".8">
        {BUILDINGS.map(([x, y, w, h, a], i) => (
          <g key={i} transform={`translate(${x} ${y}) rotate(${a})`}>
            <rect x={-w / 2} y={-h / 2} width={w} height={h} />
            {h >= 3 * w && [1, 2, 3].map((k) => <path key={k} d={`M${-w / 2} ${-h / 2 + (k * h) / 4}h${w}`} />)}
            {w >= 3 * h && [1, 2, 3].map((k) => <path key={k} d={`M${-w / 2 + (k * w) / 4} ${-h / 2}v${h}`} />)}
          </g>
        ))}
      </g>
      <path d="M765 505 785 495 797 512 778 528Z" fill="#ffffe5" stroke="#c4b6ab" />
      <path d="M1010 660Q1010 640 1050 633Q1065 640 1078 680" fill="none" stroke="#dffbe2" strokeWidth="8" />

      <Cased roads={PLAZAS} fill="#dddde8" casing="#cfc9c9" />
      <g fill="none">
        <path d={railWest} stroke="#bbb" strokeWidth="46" />
        <path d={railWest} stroke="#fff" strokeWidth="44" />
        <path d="M480 272 517 232 530 205 531 190Q535 178 541 190L540 220 525 245" fill="#f2efe9" stroke="#bbb" />
        <path d={railWest} stroke="#333" strokeWidth="9" />
        <path d={railWest} stroke="#ddd" strokeWidth="6.5" />
        <path d={railWest} stroke="#999" strokeWidth="3" strokeDasharray="12 12" />
      </g>
      <Cased roads={LANES} fill="#fff" casing="#c2bdb8" />
      <g fill="none">
        {railEast.map((d) => <path key={d} d={d} stroke="#ecd9e6" strokeWidth="20" />)}
      </g>
      <g fill="none" stroke="#fa8072" strokeWidth="1.4" strokeDasharray="3 2.5">{PINK_PATHS.map((d) => <path key={d} d={d} />)}</g>
      <g fill="none" stroke="#9a7b2f" strokeWidth="1.5" strokeDasharray="6 3">{BROWN_TRACKS.map((d) => <path key={d} d={d} />)}</g>
      <path d="M1225 277 1350 360" stroke="#fff" strokeWidth="8" fill="none" />
      <path d="M1225 277 1350 360" stroke="#999" strokeWidth="7" strokeDasharray="6 6" fill="none" />
      <Cased roads={YELLOW} fill="#f7fabf" casing="#8f9434" />
      <Cased roads={orange} fill="#fcd6a4" casing="#a8792c" />
      <Cased roads={ramps} fill="#e892a2" casing="#dc4a78" />
      <g fill="none">
        <path d={motorway} stroke="#e892a2" strokeWidth="23" />
        <path d={motorway} stroke="#dc4a78" strokeWidth="2.5" />
        <path d={motorway} stroke="#e892a2" strokeWidth=".8" />
        {railEast.map((d) => (
          <g key={d}>
            <path d={d} stroke="#6b6b6b" strokeWidth="5" />
            <path d={d} stroke="#ddd" strokeWidth="2" strokeDasharray="6 6" />
          </g>
        ))}
      </g>
      <path d="M1755 180 1863 263M1657 470 1815 508M1863 460 1825 520 1835 528 1860 547" fill="none" stroke="#c9a9c9" strokeWidth="1.5" strokeDasharray="8 3 2 3" />
      <g fill="none" stroke="#2222ee" strokeWidth="1.4" strokeDasharray="3 2.5">{CYCLE_PATHS.map((d) => <path key={d} d={d} />)}</g>

      {/* roundabouts */}
      <g stroke="#8f9434" fill="#f7fabf">
        <circle cx="985" cy="200" r="12" stroke="none" /><circle cx="985" cy="200" r="5" fill="#ccc" />
        <ellipse cx="893" cy="561" rx="18" ry="19" stroke="none" /><path d="M884 568 886 555Q893 547 902 553L904 561Q902 572 892 574Q884 573 884 568Z" fill="#cdebb0" />
        <circle cx="1608" cy="243" r="10" stroke="none" /><circle cx="1608" cy="243" r="4" fill="#cdebb0" />
        <circle cx="1817" cy="239" r="14" stroke="none" /><circle cx="1817" cy="239" r="6" fill="#cdebb0" />
        <circle cx="756" cy="410" r="7" stroke="none" /><circle cx="756" cy="410" r="2" fill="#8f9434" />
      </g>
      <g stroke="#bbb" fill="#fff">
        <circle cx="1579" cy="363" r="17" stroke="none" /><circle cx="1579" cy="363" r="8" fill="#cdebb0" />
        <circle cx="1855" cy="573" r="26" /><circle cx="1855" cy="573" r="16" fill="#cdebb0" />
        <circle cx="1362" cy="360" r="12" /><circle cx="1362" cy="360" r="7" fill="#f2efe9" />
        <circle cx="1134" cy="336" r="10" stroke="none" /><ellipse cx="1135" cy="336" rx="4" ry="5" fill="#eef0c0" />
      </g>
      <path d="M1727 297 1704 329" stroke="#8bc79a" strokeWidth="3" />
      <path d="M998 465 912 553" stroke="#add19e" strokeWidth="4" />
      <path d="M925 490q8-6 11 2l4 30M940 542q4-14 14-12t4 14" fill="none" stroke="#999" strokeWidth="6" />
      <path d="M925 490q8-6 11 2l4 30M940 542q4-14 14-12t4 14" fill="none" stroke="#fff" strokeWidth="4.5" />

      {BUS_STOPS.map(([x, y]) => <rect key={`${x}-${y}`} x={x - 3} y={y - 3} width="6" height="6" fill="#0092da" />)}
      {ARROWS.map(([c, x, y, a], i) => (
        <path key={i} d="M-6 0H3M1-3 6 0 1 3Z" fill={c} stroke={c} strokeWidth="1" transform={`translate(${x} ${y}) rotate(${a})`} />
      ))}

      {POI_ICONS.map(([Icon, color, size, x, y], i) => (
        <Icon key={i} x={x - size / 2} y={y - size / 2} size={size} color={color} />
      ))}
      {[[1002, 240], [821, 362], [1152, 299], [1291, 670]].map(([x, y]) => (
        <path key={x} d={`M${x} ${y - 7}v14M${x - 5} ${y - 3}h10`} stroke="#000" strokeWidth="2" />
      ))}
      {[[930, 614], [1794, 430]].map(([x, y]) => (
        <g key={x}><circle cx={x} cy={y} r="7" fill="#bf0000" /><path d={`M${x} ${y - 4}v8M${x - 4} ${y}h8`} stroke="#fff" strokeWidth="2" /></g>
      ))}
      <circle cx="886" cy="625" r="7" fill="#fff" stroke="#8461c4" strokeWidth="1.5" />
      <text x="886" y="629" fontSize="10" fill="#8461c4" textAnchor="middle">H</text>
      {PARKINGS.map(([x, y, o]) => <text key={x} x={x} y={y} fontSize="15" fontWeight="500" fill="#0092da" opacity={o} textAnchor="middle">P</text>)}

      <g stroke="#fff" strokeWidth="2.5" strokeLinejoin="round" paintOrder="stroke" fontSize="10">
        {LABELS.map(([t, x1, y1, x2, y2], i) => (
          <text key={i} fill="#222" textAnchor="middle" dominantBaseline="central"
            transform={`translate(${(x1 + x2) / 2} ${(y1 + y2) / 2}) rotate(${(Math.atan2(y2 - y1, x2 - x1) * 180) / Math.PI})`}>{t}</text>
        ))}
        {CURVED_LABELS.map(([id, t, d]) => (
          <g key={id}>
            <path id={id} d={d} fill="none" stroke="none" />
            <text fill="#222"><textPath href={`#${id}`}>{t}</textPath></text>
          </g>
        ))}
        {POI_TEXT.map(([t, x, y, c, s, it, a], i) => (
          <text key={i} fill={c} fontSize={s} fontStyle={it ? "italic" : "normal"} strokeOpacity=".7" textAnchor="middle" transform={`translate(${x} ${y}) rotate(${a})`}>{t}</text>
        ))}
        <text x="534" y="276" fill="#b3123c" textAnchor="middle">3</text>
      </g>
      <rect x="577.5" y="189.5" width="33" height="18" rx="2" fill="#efc6cf" stroke="#d98fa5" />
      <text x="594" y="203" fontSize="11" fill="#7a1f3e" textAnchor="middle">A 25</text>
      <rect x="714.5" y="243.5" width="45" height="19" rx="2" fill="#ecedc9" stroke="#c3c79a" />
      <text x="737" y="257" fontSize="11" fill="#4d4d12" textAnchor="middle">EN 235</text>

      <Pin x={671.5} y={601} from="#4a9ad8" to="#1f6fb5" id="pinBlue" />
      <Pin x={1457.5} y={297} from="#8a8a8a" to="#585858" id="pinGrey" />
    </svg>
  );
}

/* ---------- page ---------- */

function Card({ children, className = "" }) {
  return (
    <section className={`rounded-xl bg-white px-[15px] shadow-[0_6px_10px_-4px_rgba(0,0,0,0.15)] ${className}`}>{children}</section>
  );
}

function StatCard({ icon, label, value }) {
  return (
    <Card className="pt-3 pb-[10px]">
      <div className="flex justify-between">
        <div className="flex h-[68px] w-[94px] items-center justify-center">{icon}</div>
        <div className="text-right">
          <p className="text-base leading-[28px] text-[#9a9a9a]">{label}</p>
          <p className="text-[28px] leading-[36px] font-light text-[#252422]">{value}</p>
        </div>
      </div>
      <hr className="mt-2 border-[#e3e3e3]" />
      <div className="mt-[11px] flex h-[30px] items-center gap-[9px] text-sm text-[#9a9a9a]">
        <svg viewBox="0 0 1536 1536" className="size-3" fill="#66615b"><path d={REFRESH} /></svg>
        In Real Time
      </div>
    </Card>
  );
}

const LEGEND = [
  ["People detected by video", "bg-[#fbc368] border-[#f9cd84]"],
  ["Devices detected by sniffing", "bg-[#f17e5d] border-[#f4937a]"],
  ["Vehicles detected by video", "bg-[#6bd098] border-[#8edab0]"],
];

export default function App() {
  return (
    <div className={`flex h-screen overflow-hidden bg-[#f4f3ef] ${UI_FONT}`}>
      <aside className="relative w-[260px] shrink-0 border-r border-[#ddd] bg-white">
        <div className="mx-[15px] h-[154px] border-b border-[#bbb] pt-[22px] pl-[3px]">
          <Logo />
        </div>
        <nav className="mt-[31px] pr-12 pl-[23px]">
          <a href="#detection" className="block text-xs leading-[30px] text-[#00a3dd] uppercase">
            Moliceiros and people detection
          </a>
        </nav>
        <svg viewBox="0 0 16 32" className="absolute top-[182px] -right-px h-8 w-4">
          <path d="M16 1 1 16 16 31" fill="#f4f3ef" stroke="#ddd" />
        </svg>
      </aside>

      <div className="flex min-w-0 flex-1 flex-col">
        <header className="flex h-[63px] shrink-0 items-start justify-end gap-[29px] border-b border-[#ddd] pt-4 pr-[56px] text-[#66615b]">
          <button type="button" className="flex h-[30px] items-center text-sm">
            <LangIcon />
            <span className="ml-[9px]">CHANGE LANG</span>
            <svg viewBox="0 0 8 4" className="ml-1 h-1 w-2" fill="#66615b"><path d="M0 0h8L4 4z" /></svg>
          </button>
          <button type="button" aria-label="Account" className="flex h-[32px] items-center">
            <svg viewBox="256 128 1280 1536" className="h-4 w-[13px]" fill="#66615b"><path d={USER} /></svg>
          </button>
        </header>

        <main className="flex flex-1 flex-col gap-5 overflow-hidden px-[30px] pt-[30px]">
          <Card className="shrink-0 pt-[26px] pb-[30px]">
            <h1 className="text-[22px] leading-[30px] text-[#252422]">Map</h1>
            <div className="relative mt-[31px] font-['Liberation_Sans',sans-serif]">
              <CityMap />
              <div className="absolute top-2.5 left-2.5 rounded border-2 border-black/20 bg-clip-padding">
                <button type="button" aria-label="Zoom in" className="block size-[30px] rounded-t-sm border-b border-[#ccc] bg-white text-[22px] leading-[30px] font-bold text-black">+</button>
                <button type="button" aria-label="Zoom out" className="block size-[30px] rounded-b-sm bg-white text-[22px] leading-[30px] font-bold text-black">−</button>
              </div>
              <p className="absolute right-0 bottom-0 bg-white/70 px-[5px] text-[11px] leading-[17px] text-[#333]">
                <a href="#leaflet" className="text-[#0078a8]">Leaflet</a> | © <a href="#osm" className="text-[#0078a8]">OpenStreetMap</a> contributors
              </p>
            </div>
          </Card>

          <div className="grid shrink-0 grid-cols-4 gap-[30px]">
            <StatCard icon={<MobileIcon />} label="Devices Detected" value="1" />
            <StatCard icon={<CarIcon />} label="Vehicles Detected" value="0" />
            <StatCard icon={<PeopleIcon />} label="People Detected" value="0" />
            <StatCard icon={<BikeIcon />} label="Two Wheelers Detected" value="0" />
          </div>

          <Card className="h-[600px] shrink-0 pt-[25px]">
            <h2 className="text-[22px] leading-[30px] text-[#252422]">Users history</h2>
            <p className="mt-[7px] text-sm leading-[30px] text-[#9a9a9a]">06/06/2021</p>
            <div className="mt-[34px] font-['Liberation_Sans',sans-serif] text-xs text-[#666]">
              <ul className="flex justify-center">
                {LEGEND.map(([label, swatch]) => (
                  <li key={label} className="flex h-[18px] items-center gap-1 pr-2">
                    <span className={`h-4 w-11 border-2 ${swatch}`} />
                    {label}
                  </li>
                ))}
              </ul>
              <svg viewBox="0 0 1558 400" className="h-[400px] w-full" role="img" aria-label="Users history chart">
                <text x="6" y="11" fontSize="12" fill="#9a9a9a">60</text>
                <path d="M738 61Q742 41 752 33Q760 25 770 33Q780 41 790 61" fill="none" stroke="#f17e5d" strokeWidth="3" />
                <circle cx="752" cy="34" r="4" fill="#f4a48c" />
              </svg>
            </div>
          </Card>
        </main>
      </div>

      <div className="w-3 shrink-0 bg-[#cdcdcd] px-[3px] pt-[3px]" aria-hidden="true">
        <div className="h-[426px] rounded-full bg-[#7f8281]" />
      </div>
    </div>
  );
}
